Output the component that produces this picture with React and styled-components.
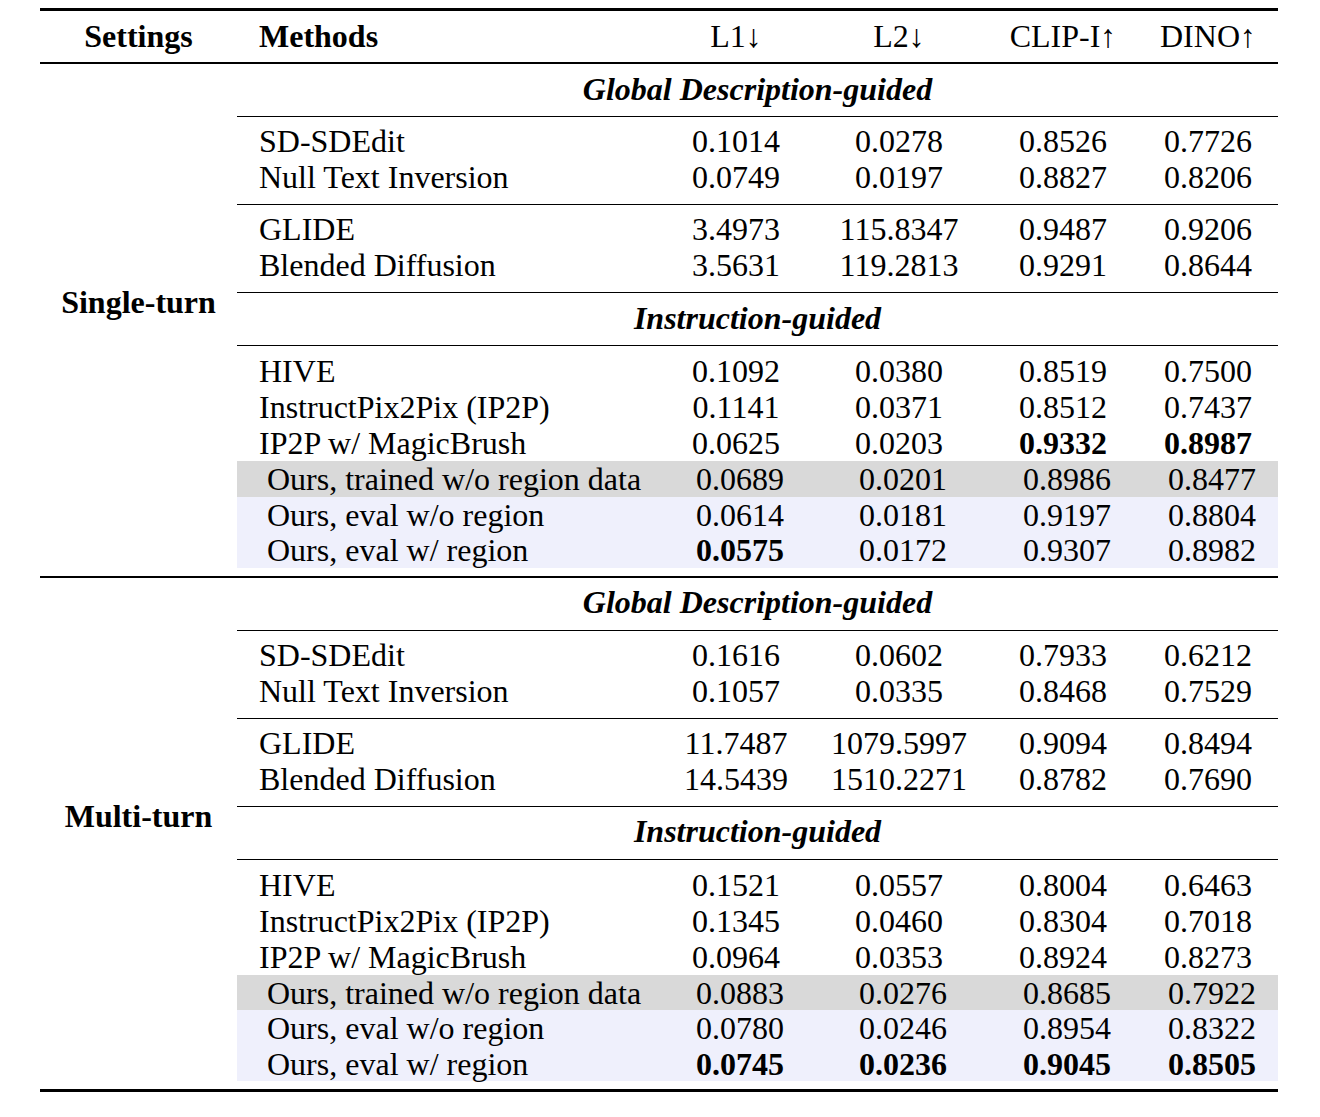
import React from 'react';
import styled, { createGlobalStyle } from 'styled-components';

const GlobalStyle = createGlobalStyle`
    html, body {
        margin: 0;
        padding: 0;
        background: #ffffff;
    }
    body {
        font-family: "Liberation Serif", "Times New Roman", serif;
        color: #000;
    }
`;

const COLS = '418px 162px 164px 164px 126px';

const Table = styled.div`
    width: 1238px;
    margin-left: 40px;
    padding-top: 8px;
    font-size: 32px;
`;

const Rule = styled.div`
    height: ${(p) => p.weight || 1}px;
    background: #000;
`;

const HeaderRow = styled.div`
    display: grid;
    grid-template-columns: 197px ${COLS};
    align-items: center;
    height: 51px;
    padding-bottom: 1px;
    box-sizing: border-box;
`;

const HeadCell = styled.div`
    text-align: ${(p) => p.align || 'center'};
    padding-left: ${(p) => p.indent || 0}px;
    font-weight: ${(p) => (p.bold ? 700 : 400)};
    white-space: nowrap;
`;

const Section = styled.div`
    display: grid;
    grid-template-columns: 197px 1fr;
`;

const SettingLabel = styled.div`
    display: flex;
    align-items: center;
    justify-content: center;
    font-weight: 700;
    padding-bottom: 34px;
    white-space: nowrap;
`;

const Body = styled.div`
    display: flex;
    flex-direction: column;
`;

const GroupTitle = styled.div`
    height: 52px;
    padding-bottom: 2px;
    box-sizing: border-box;
    display: flex;
    align-items: center;
    justify-content: center;
    font-weight: 700;
    font-style: italic;
`;

const Group = styled.div`
    padding: ${(p) => p.pad || '6px 0 9px'};
`;

const Row = styled.div`
    display: grid;
    grid-template-columns: ${COLS};
    height: ${(p) => p.h || 36}px;
    align-items: center;
    background: ${(p) => p.bg || 'transparent'};
`;

const Method = styled.div`
    padding-left: ${(p) => (p.shifted ? 30 : 22)}px;
    white-space: nowrap;
`;

const Num = styled.div`
    text-align: center;
    padding-left: ${(p) => (p.shifted ? 8 : 0)}px;
    font-weight: ${(p) => (p.bold ? 700 : 400)};
    white-space: nowrap;
`;

const GRAY = '#d9d9d9';
const LAVENDER = '#eff0fc';

const single = {
    global: [
        [
            ['SD-SDEdit', '0.1014', '0.0278', '0.8526', '0.7726'],
            ['Null Text Inversion', '0.0749', '0.0197', '0.8827', '0.8206'],
        ],
        [
            ['GLIDE', '3.4973', '115.8347', '0.9487', '0.9206'],
            ['Blended Diffusion', '3.5631', '119.2813', '0.9291', '0.8644'],
        ],
    ],
    instr: [
        { v: ['HIVE', '0.1092', '0.0380', '0.8519', '0.7500'] },
        { v: ['InstructPix2Pix (IP2P)', '0.1141', '0.0371', '0.8512', '0.7437'] },
        { v: ['IP2P w/ MagicBrush', '0.0625', '0.0203', '0.9332', '0.8987'], bold: [3, 4] },
        { v: ['Ours, trained w/o region data', '0.0689', '0.0201', '0.8986', '0.8477'], bg: GRAY },
        { v: ['Ours, eval w/o region', '0.0614', '0.0181', '0.9197', '0.8804'], bg: LAVENDER },
        { v: ['Ours, eval w/ region', '0.0575', '0.0172', '0.9307', '0.8982'], bg: LAVENDER, bold: [1] },
    ],
};

const multi = {
    global: [
        [
            ['SD-SDEdit', '0.1616', '0.0602', '0.7933', '0.6212'],
            ['Null Text Inversion', '0.1057', '0.0335', '0.8468', '0.7529'],
        ],
        [
            ['GLIDE', '11.7487', '1079.5997', '0.9094', '0.8494'],
            ['Blended Diffusion', '14.5439', '1510.2271', '0.8782', '0.7690'],
        ],
    ],
    instr: [
        { v: ['HIVE', '0.1521', '0.0557', '0.8004', '0.6463'] },
        { v: ['InstructPix2Pix (IP2P)', '0.1345', '0.0460', '0.8304', '0.7018'] },
        { v: ['IP2P w/ MagicBrush', '0.0964', '0.0353', '0.8924', '0.8273'] },
        { v: ['Ours, trained w/o region data', '0.0883', '0.0276', '0.8685', '0.7922'], bg: GRAY },
        { v: ['Ours, eval w/o region', '0.0780', '0.0246', '0.8954', '0.8322'], bg: LAVENDER },
        { v: ['Ours, eval w/ region', '0.0745', '0.0236', '0.9045', '0.8505'], bg: LAVENDER, bold: [1, 2, 3, 4] },
    ],
};

function DataRow({ values, bg, bold = [], h }) {
    const shifted = !!bg;
    return (
        <Row bg={bg} h={h}>
            <Method shifted={shifted}>{values[0]}</Method>
            {values.slice(1).map((val, idx) => (
                <Num key={idx} shifted={shifted} bold={bold.includes(idx + 1)}>
                    {val}
                </Num>
            ))}
        </Row>
    );
}

function SettingSection({ label, data }) {
    return (
        <Section>
            <SettingLabel>{label}</SettingLabel>
            <Body>
                <GroupTitle>Global Description-guided</GroupTitle>
                {data.global.map((rows, gi) => (
                    <React.Fragment key={gi}>
                        <Rule />
                        <Group>
                            {rows.map((r, i) => (
                                <DataRow key={i} values={r} />
                            ))}
                        </Group>
                    </React.Fragment>
                ))}
                <Rule />
                <GroupTitle>Instruction-guided</GroupTitle>
                <Rule />
                <Group pad="7px 0 8px">
                    {data.instr.map((r, i) => (
                        <DataRow key={i} values={r.v} bg={r.bg} bold={r.bold} h={i < 3 ? 36 : 35.5} />
                    ))}
                </Group>
            </Body>
        </Section>
    );
}

export default function App() {
    return (
        <>
            <GlobalStyle />
            <Table>
                <Rule weight={3} />
                <HeaderRow>
                    <HeadCell bold>Settings</HeadCell>
                    <HeadCell bold align="left" indent={22}>Methods</HeadCell>
                    <HeadCell>L1↓</HeadCell>
                    <HeadCell>L2↓</HeadCell>
                    <HeadCell>CLIP-I↑</HeadCell>
                    <HeadCell>DINO↑</HeadCell>
                </HeaderRow>
                <Rule weight={2} />
                <SettingSection label="Single-turn" data={single} />
                <Rule weight={2} />
                <SettingSection label="Multi-turn" data={multi} />
                <Rule weight={3} />
            </Table>
        </>
    );
}
